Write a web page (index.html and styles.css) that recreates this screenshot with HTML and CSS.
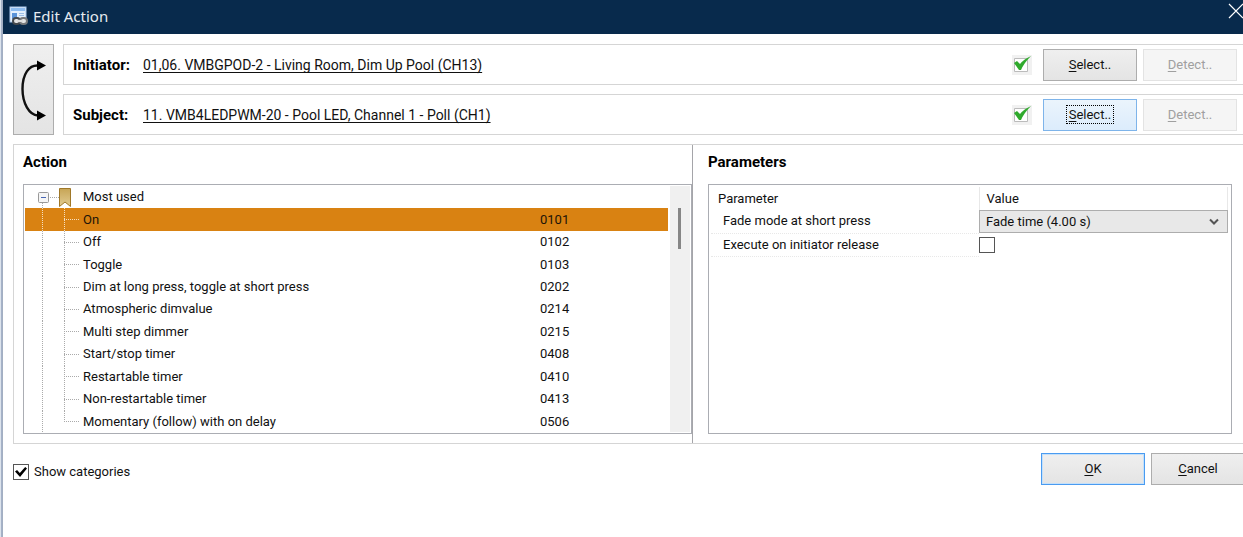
FILE: index.html
```
<!DOCTYPE html>
<html lang="en">
<head>
<meta charset="utf-8">
<title>Edit Action</title>
<link rel="stylesheet" href="styles.css">
</head>
<body>
<div class="backdrop"></div>
<main class="dialog">
  <header class="titlebar">
    <svg class="app-icon" width="19" height="20" viewBox="0 0 19 20" aria-hidden="true">
      <rect x="1" y="1" width="16" height="15" fill="#e4f0fc" stroke="#a9c8ee"/>
      <rect x="2" y="2" width="14" height="3" fill="#8dbcf0"/>
      <rect x="3" y="7" width="5" height="6" fill="#5a93d8"/>
      <path d="M10 7.500h5M10 9.500h5" stroke="#9dbfe8"/>
      <rect x="4" y="12" width="7" height="6" rx="3" fill="#e4e4e4" stroke="#44484c" stroke-width="2"/>
      <rect x="11" y="12" width="7" height="6" rx="3" fill="#e4e4e4" stroke="#77797b" stroke-width="2"/>
      <path d="M8 15h6" stroke="#ddd" stroke-width="2"/>
    </svg>
    <h1 class="title">Edit Action</h1>
    <button class="close" aria-label="Close"><svg width="16" height="16" viewBox="0 0 16 16"><path d="M1 1l14 14M15 1L1 15" stroke="#fff" stroke-width="1.200"/></svg></button>
  </header>

  <section class="endpoints">
    <button class="btn swap" aria-label="Swap initiator and subject">
      <svg width="28" height="64" viewBox="0 0 28 64"><path d="M18 7.500C9 7 2.500 16 2.500 31C2.500 45 9 57 18 57.500" fill="none" stroke="#111" stroke-width="2.400"/><path d="M17 2.500L26 7.500L17 12.500ZM17 52.500L26 57.500L17 62.500Z" fill="#000"/></svg>
    </button>
    <div class="endpoint">
      <span class="label">Initiator:</span>
      <a class="link" href="#">01,06. VMBGPOD-2 - Living Room, Dim Up Pool (CH13)</a>
      <svg class="valid" width="20" height="20" viewBox="0 0 20 20" role="img" aria-label="Valid"><path d="M0 0h20v20H0z" fill="#f1f1f1"/><path d="M2.500 3.500h13v13h-13z" fill="#fff" stroke="#bbb"/><path d="M2 8L5 6L8 9Q12 4 19 1Q12 8 9 15H7Z" fill="#2faa2c"/></svg>
      <button class="btn"><u>S</u>elect..</button>
      <button class="btn" disabled><u>D</u>etect..</button>
    </div>
    <div class="endpoint">
      <span class="label">Subject:</span>
      <a class="link" href="#">11. VMB4LEDPWM-20 - Pool LED, Channel 1 - Poll (CH1)</a>
      <svg class="valid" width="20" height="20" viewBox="0 0 20 20" role="img" aria-label="Valid"><path d="M0 0h20v20H0z" fill="#f1f1f1"/><path d="M2.500 3.500h13v13h-13z" fill="#fff" stroke="#bbb"/><path d="M2 8L5 6L8 9Q12 4 19 1Q12 8 9 15H7Z" fill="#2faa2c"/></svg>
      <button class="btn focused"><span class="focus-ring"><u>S</u>elect..</span></button>
      <button class="btn" disabled><u>D</u>etect..</button>
    </div>
  </section>

  <div class="panes">
    <section class="pane actions">
      <h2 class="heading">Action</h2>
      <div class="list">
        <ul class="tree">
          <li class="row group">
            <svg class="node" width="44" height="22" viewBox="0 0 44 22" aria-hidden="true"><defs><linearGradient id="ribbon" x2="0" y2="1"><stop stop-color="#c7a556"/><stop offset="1" stop-color="#e2cc93"/></linearGradient></defs><path d="M11 11.500h9M3.500 17v5" stroke="#aaa" stroke-dasharray="1 1"/><rect x="-.5" y="6.500" width="10" height="10" rx="1" fill="#f5f5f5" stroke="#999"/><path d="M2 11.500h5" stroke="#4867b5"/><path d="M20.500 2.500h11v18L26 16l-5.500 4.500z" fill="url(#ribbon)" stroke="#a07828"/></svg>
            <span>Most used</span>
          </li>
          <li class="row selected"><span>On</span><span class="code">0101</span></li>
          <li class="row"><span>Off</span><span class="code">0102</span></li>
          <li class="row"><span>Toggle</span><span class="code">0103</span></li>
          <li class="row"><span>Dim at long press, toggle at short press</span><span class="code">0202</span></li>
          <li class="row"><span>Atmospheric dimvalue</span><span class="code">0214</span></li>
          <li class="row"><span>Multi step dimmer</span><span class="code">0215</span></li>
          <li class="row"><span>Start/stop timer</span><span class="code">0408</span></li>
          <li class="row"><span>Restartable timer</span><span class="code">0410</span></li>
          <li class="row"><span>Non-restartable timer</span><span class="code">0413</span></li>
          <li class="row last"><span>Momentary (follow) with on delay</span><span class="code">0506</span></li>
        </ul>
        <div class="scrollbar"><div class="thumb"></div></div>
      </div>
    </section>
    <section class="pane parameters">
      <h2 class="heading">Parameters</h2>
      <div class="list">
        <table class="params">
          <thead><tr><th>Parameter</th><th>Value</th></tr></thead>
          <tbody>
            <tr><td><label for="fade">Fade mode at short press</label></td><td><div class="combo"><select id="fade"><option>Fade time (4.00 s)</option></select><svg width="10" height="8" viewBox="0 0 10 8"><path d="M1 1.500L5 5.500L9 1.500" fill="none" stroke="#555" stroke-width="2"/></svg></div></td></tr>
            <tr><td><label for="release">Execute on initiator release</label></td><td><input class="check" type="checkbox" id="release"></td></tr>
          </tbody>
        </table>
      </div>
    </section>
  </div>

  <footer class="footer">
    <label class="option"><input class="check" type="checkbox" checked>Show categories</label>
    <button class="btn default"><u>O</u>K</button>
    <button class="btn"><u>C</u>ancel</button>
  </footer>
</main>
</body>
</html>
```
FILE: styles.css
```
* { box-sizing: border-box; }
body {
  margin: 0;
  min-height: 100vh;
  display: flex;
  overflow: hidden;
  background: #fff;
  color: #111;
  font: 13px/16px Roboto, "Liberation Sans", sans-serif;
}
button, select, input { font: inherit; color: inherit; margin: 0; }
u { text-underline-offset: 2px; }
.backdrop {
  flex: 0 0 3px;
  background: linear-gradient(90deg, #dce3ec 0 1px, #a5b2c8 1px 2px, #a3afc2 2px);
}
/* The dialog runs a little past the right edge of the window. */
.dialog { flex: 1 0 auto; width: calc(100% + 9px); }
.titlebar {
  display: flex;
  align-items: center;
  height: 34px;
  padding: 0 11px 2px 6px;
  background: #082a4c;
  color: #e6ebf0;
}
.app-icon { flex: none; }
.title { flex: 1; margin: 0 0 0 5px; font: 15px/20px "Noto Sans", sans-serif; }
.close { align-self: flex-start; padding: 3px 0 0; border: 0; background: none; line-height: 0; }
.endpoints {
  display: grid;
  grid-template-columns: 41px 1fr;
  gap: 9px;
  padding: 10px 6px 9px 10px;
}
.endpoint {
  display: flex;
  align-items: center;
  height: 41px;
  padding: 0 11px 0 9px;
  border: 1px solid #d5d5d5;
}
.label { width: 70px; font-size: 15px; font-weight: 700; color: #000; }
.link { flex: 1; font-size: 14px; color: inherit; text-underline-offset: 2px; text-decoration-skip-ink: none; }
.btn {
  width: 94px;
  height: 32px;
  padding: 0;
  border: 1px solid #adadad;
  background: linear-gradient(#efefef, #e4e4e4);
}
.valid { margin-right: 11px; }
.btn + .btn { margin-left: 6px; }
.btn:disabled { border-color: #e3e3e3; background: #f5f5f5; color: #a0a0a0; }
.focused { border-color: #7eb4ea; background: linear-gradient(#ebf4fc, #dcecfc); }
.focus-ring { padding: 1px 2px; outline: 1px dotted #000; }
.swap { grid-row: span 2; width: auto; height: auto; line-height: 0; }
.panes {
  display: grid;
  grid-template-columns: 679px 1fr;
  margin-left: 10px;
  border: 1px solid #d5d5d5;
}
.pane { padding: 9px 0 9px 9px; }
.actions { border-right: 1px solid #a5a5a9; }
.parameters { padding: 9px 22px 9px 15px; }
.heading { margin: 0 0 14px; font-size: 15px; line-height: 16px; color: #000; }
.list { display: flex; height: 250px; border: 1px solid #abadb3; }
.tree {
  flex: 1;
  display: flex;
  flex-direction: column;
  margin: 0;
  padding: 1px 0 0 1px;
  list-style: none;
}
.row {
  flex: 1;
  display: flex;
  align-items: center;
  padding-left: 58px;
  background:
    repeating-linear-gradient(#aaa 0 1px, transparent 1px 2px) 17px 0 / 1px 100% no-repeat,
    repeating-linear-gradient(#aaa 0 1px, transparent 1px 2px) 39px 0 / 1px 100% no-repeat,
    repeating-linear-gradient(90deg, #aaa 0 1px, transparent 1px 2px) 39px 50% / 15px 1px no-repeat;
}
.group { padding-left: 14px; background: none; }
.node { flex: none; overflow: visible; }
.last { background-size: 1px 100%, 1px 50%, 15px 1px; }
.selected {
  color: #1c1408;
  background:
    repeating-linear-gradient(#f5dfc0 0 1px, transparent 1px 2px) 17px 0 / 1px 100% no-repeat,
    repeating-linear-gradient(#f5dfc0 0 1px, transparent 1px 2px) 39px 0 / 1px 100% no-repeat,
    repeating-linear-gradient(90deg, #f5dfc0 0 1px, transparent 1px 2px) 39px 50% / 15px 1px no-repeat,
    #d98212;
}
.code { width: 128px; margin-left: auto; }
.scrollbar { width: 20px; margin: 1px 1px 1px 2px; padding: 22px 0 0 8px; background: #f0f0f0; }
.thumb { width: 3px; height: 41px; background: #868686; }
.params { width: 100%; align-self: flex-start; margin: 2px 3px 0 2px; border-collapse: collapse; table-layout: fixed; }
.params th, .params td { height: 23px; padding: 0; text-align: left; font-weight: 400; }
.params th { padding-left: 7px; border-right: 1px solid #e8e8e8; }
.params th:first-child { width: 268px; }
.params td:first-child { padding-left: 12px; border-bottom: 1px dotted #e8e8e8; }
.combo { display: flex; align-items: center; height: 23px; padding-right: 8px; border: 1px solid #adadad; background: #e8e8e8; }
.combo select { flex: 1; appearance: none; padding: 0 0 0 6px; border: 0; background: none; }
.check {
  appearance: none;
  display: block;
  width: 16px;
  height: 16px;
  border: 1px solid #555;
  background: #fff;
}
.check:checked::before {
  content: "";
  display: block;
  width: 12px;
  height: 10px;
  margin: 2px 1px;
  background: #000;
  clip-path: polygon(0 45%, 17% 30%, 40% 60%, 85% 0, 100% 15%, 42% 100%);
}
.footer { display: flex; align-items: center; padding: 9px 10px 0 10px; }
.option { display: flex; align-items: center; gap: 5px; margin: 6px auto 0 0; }
.default { width: 104px; border-color: #4a9bf0; box-shadow: inset 0 0 0 1px #c4e0fa; }
```
